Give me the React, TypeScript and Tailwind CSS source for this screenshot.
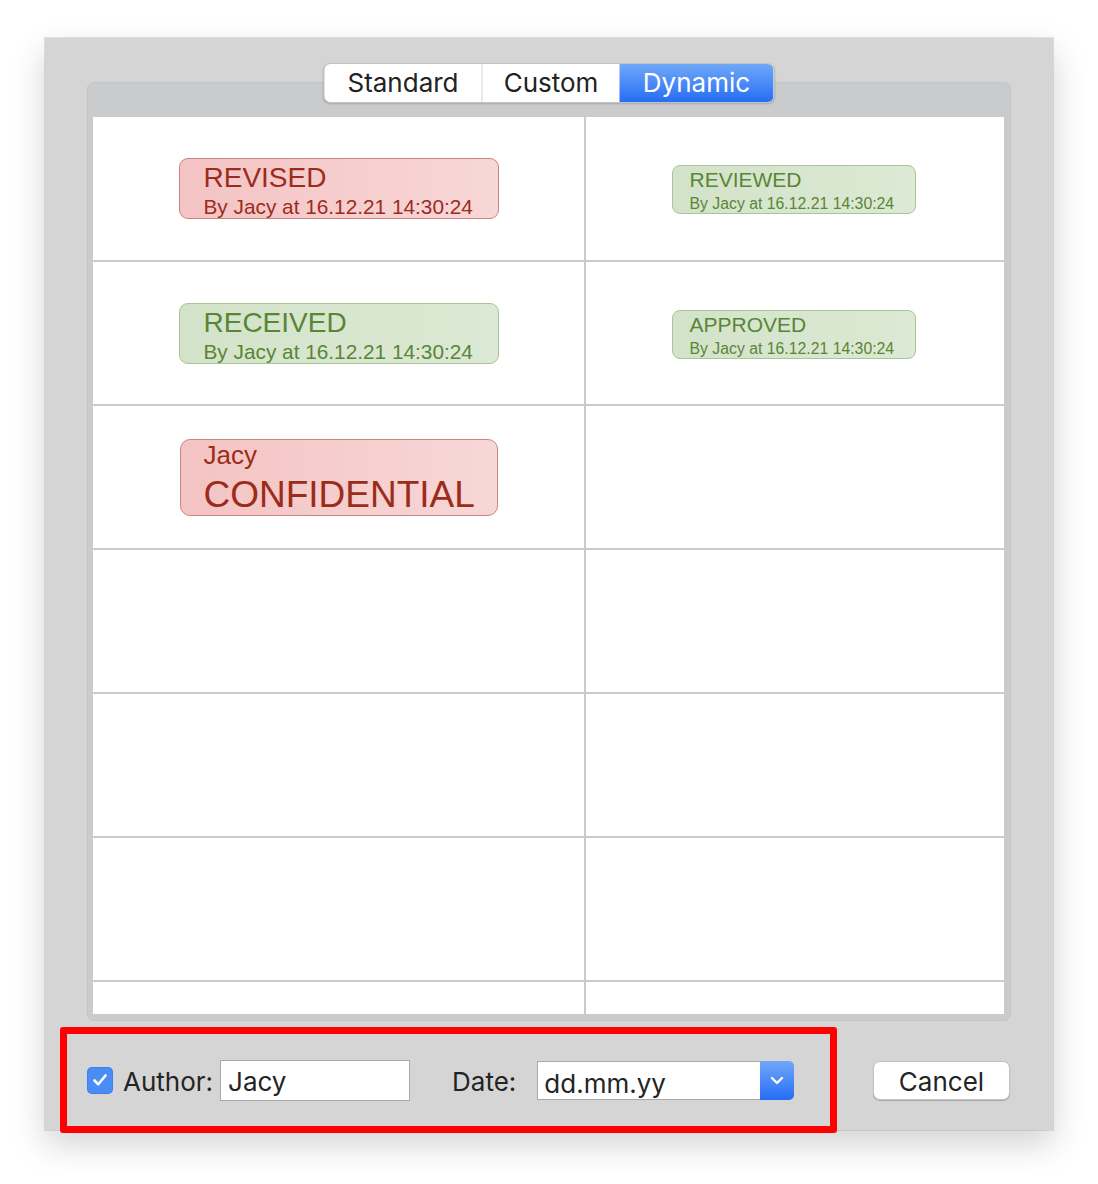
import React from "react";

type Tone = "red" | "green";

const toneCls: Record<Tone, string> = {
  red: "bg-gradient-to-r from-[#f4c3c3] to-[#f8d7d7] border-[#c98681] text-[#9b2c1b]",
  green: "bg-gradient-to-r from-[#d3e3c9] to-[#dce9d4] border-[#a8c499] text-[#5a8536]",
};

function BigStamp({ tone, title }: { tone: Tone; title: string }) {
  return (
    <div
      className={`w-[320px] h-[61px] border rounded-[9px] pl-[24px] pt-[5px] font-['Liberation_Sans',Arial,sans-serif] ${toneCls[tone]}`}
    >
      <div className="text-[28px] leading-none whitespace-nowrap">{title}</div>
      <div className="text-[20.8px] leading-none mt-[5px] whitespace-nowrap">By Jacy at 16.12.21 14:30:24</div>
    </div>
  );
}

function SmallStamp({ tone, title }: { tone: Tone; title: string }) {
  return (
    <div
      className={`w-[244px] h-[49px] border rounded-[8px] pl-[17px] pt-[3px] font-['Liberation_Sans',Arial,sans-serif] ${toneCls[tone]}`}
    >
      <div className="text-[21px] leading-none whitespace-nowrap">{title}</div>
      <div className="text-[15.8px] leading-none mt-[6px] whitespace-nowrap">By Jacy at 16.12.21 14:30:24</div>
    </div>
  );
}

function ConfStamp() {
  return (
    <div
      className={`w-[318px] h-[77px] border rounded-[10px] pl-[23px] pt-[2px] font-['Liberation_Sans',Arial,sans-serif] ${toneCls.red}`}
    >
      <div className="text-[26px] leading-none whitespace-nowrap">Jacy</div>
      <div className="text-[37px] leading-none mt-[8px] whitespace-nowrap">CONFIDENTIAL</div>
    </div>
  );
}

function Row({
  left,
  right,
  first,
}: {
  left?: React.ReactNode;
  right?: React.ReactNode;
  first?: boolean;
}) {
  return (
    <div className={`flex shrink-0 border-b-2 border-[#cacaca] ${first ? "h-[145px]" : "h-[144px]"}`}>
      <div className="w-[493px] shrink-0 border-r-2 border-[#cacaca] flex items-center justify-center">
        {left}
      </div>
      <div className="flex-1 flex items-center justify-center pr-[3px] pt-[2px]">{right}</div>
    </div>
  );
}

function Check() {
  return (
    <div className="w-[26px] h-[27px] rounded-[5px] bg-[#4a8cf5] flex items-center justify-center shadow-[inset_0_0_0_1px_rgba(40,100,220,0.35)]">
      <svg width="18" height="18" viewBox="0 0 18 18" fill="none">
        <path d="M3.5 9.5 L7.3 13.3 L14.5 4.5" stroke="white" strokeWidth="2.6" strokeLinecap="round" strokeLinejoin="round" />
      </svg>
    </div>
  );
}

export default function App() {
  return (
    <div className="w-[1098px] h-[1184px] bg-white pt-[38px] pl-[45px] font-['Inter',sans-serif]">
      <div className="relative w-[1008px] h-[1092px] bg-[#d5d5d6] shadow-[0_0_0_1px_rgba(0,0,0,0.10),0_14px_32px_rgba(0,0,0,0.18)] flex flex-col">
        {/* tab box */}
        <div className="relative mt-[44px] mx-[42px] h-[939px] rounded-[7px] bg-[#cacbcc] border border-[#c4c5c6] pt-[34px] pl-[5px] pr-[6px] pb-[6px]">
          <div className="absolute left-1/2 -translate-x-1/2 -top-[20px] flex h-[40px] rounded-[7px] bg-white border border-[#c4c4c4] shadow-[0_1px_2px_rgba(0,0,0,0.18)] overflow-hidden text-[26px] leading-none">
            <div className="w-[158px] flex items-center justify-center text-[#222] border-r border-[#d6d6d6]">Standard</div>
            <div className="w-[137px] flex items-center justify-center text-[#222]">Custom</div>
            <div className="w-[154px] flex items-center justify-center text-white bg-gradient-to-b from-[#6fa7f8] to-[#266cf4]">Dynamic</div>
          </div>
          <div className="w-full h-full bg-white flex flex-col overflow-hidden">
            <Row first left={<BigStamp tone="red" title="REVISED" />} right={<SmallStamp tone="green" title="REVIEWED" />} />
            <Row left={<BigStamp tone="green" title="RECEIVED" />} right={<SmallStamp tone="green" title="APPROVED" />} />
            <Row left={<ConfStamp />} />
            <Row />
            <Row />
            <Row />
            <Row />
          </div>
        </div>

        {/* bottom controls */}
        <div className="mt-[38px] h-[42px] flex items-center justify-between pl-[42px] pr-[43px] text-[26px] leading-none text-[#242424]">
          <div className="flex items-center">
            <Check />
            <span className="ml-[10px] pt-[3px]">Author:</span>
            <div className="ml-[7px] w-[190px] h-[41px] bg-white border border-[#a9a9a9] flex items-center pl-[7px] pt-[3px]">
              Jacy
            </div>
            <span className="ml-[42px] pt-[3px]">Date:</span>
            <div className="ml-[21px] w-[257px] h-[39px] flex">
              <div className="flex-1 bg-white border border-[#a9a9a9] border-r-0 flex items-center pl-[6px] pt-[7px]">
                dd.mm.yy
              </div>
              <div className="w-[34px] rounded-r-[5px] bg-gradient-to-b from-[#6fa7f8] to-[#266cf4] flex items-center justify-center">
                <svg width="16" height="12" viewBox="0 0 16 12" fill="none">
                  <path d="M3 4 L8 9 L13 4" stroke="white" strokeWidth="2.4" strokeLinecap="round" strokeLinejoin="round" />
                </svg>
              </div>
            </div>
          </div>
          <div className="w-[137px] h-[39px] bg-white rounded-[7px] border border-[#c2c2c2] shadow-[0_1px_1px_rgba(0,0,0,0.22)] flex items-center justify-center pt-[3px]">
            Cancel
          </div>
        </div>

        {/* red annotation frame */}
        <div className="absolute left-[15px] top-[989px] w-[777px] h-[106px] border-[7px] border-[#ff0000] rounded-[3px]" />
      </div>
    </div>
  );
}
